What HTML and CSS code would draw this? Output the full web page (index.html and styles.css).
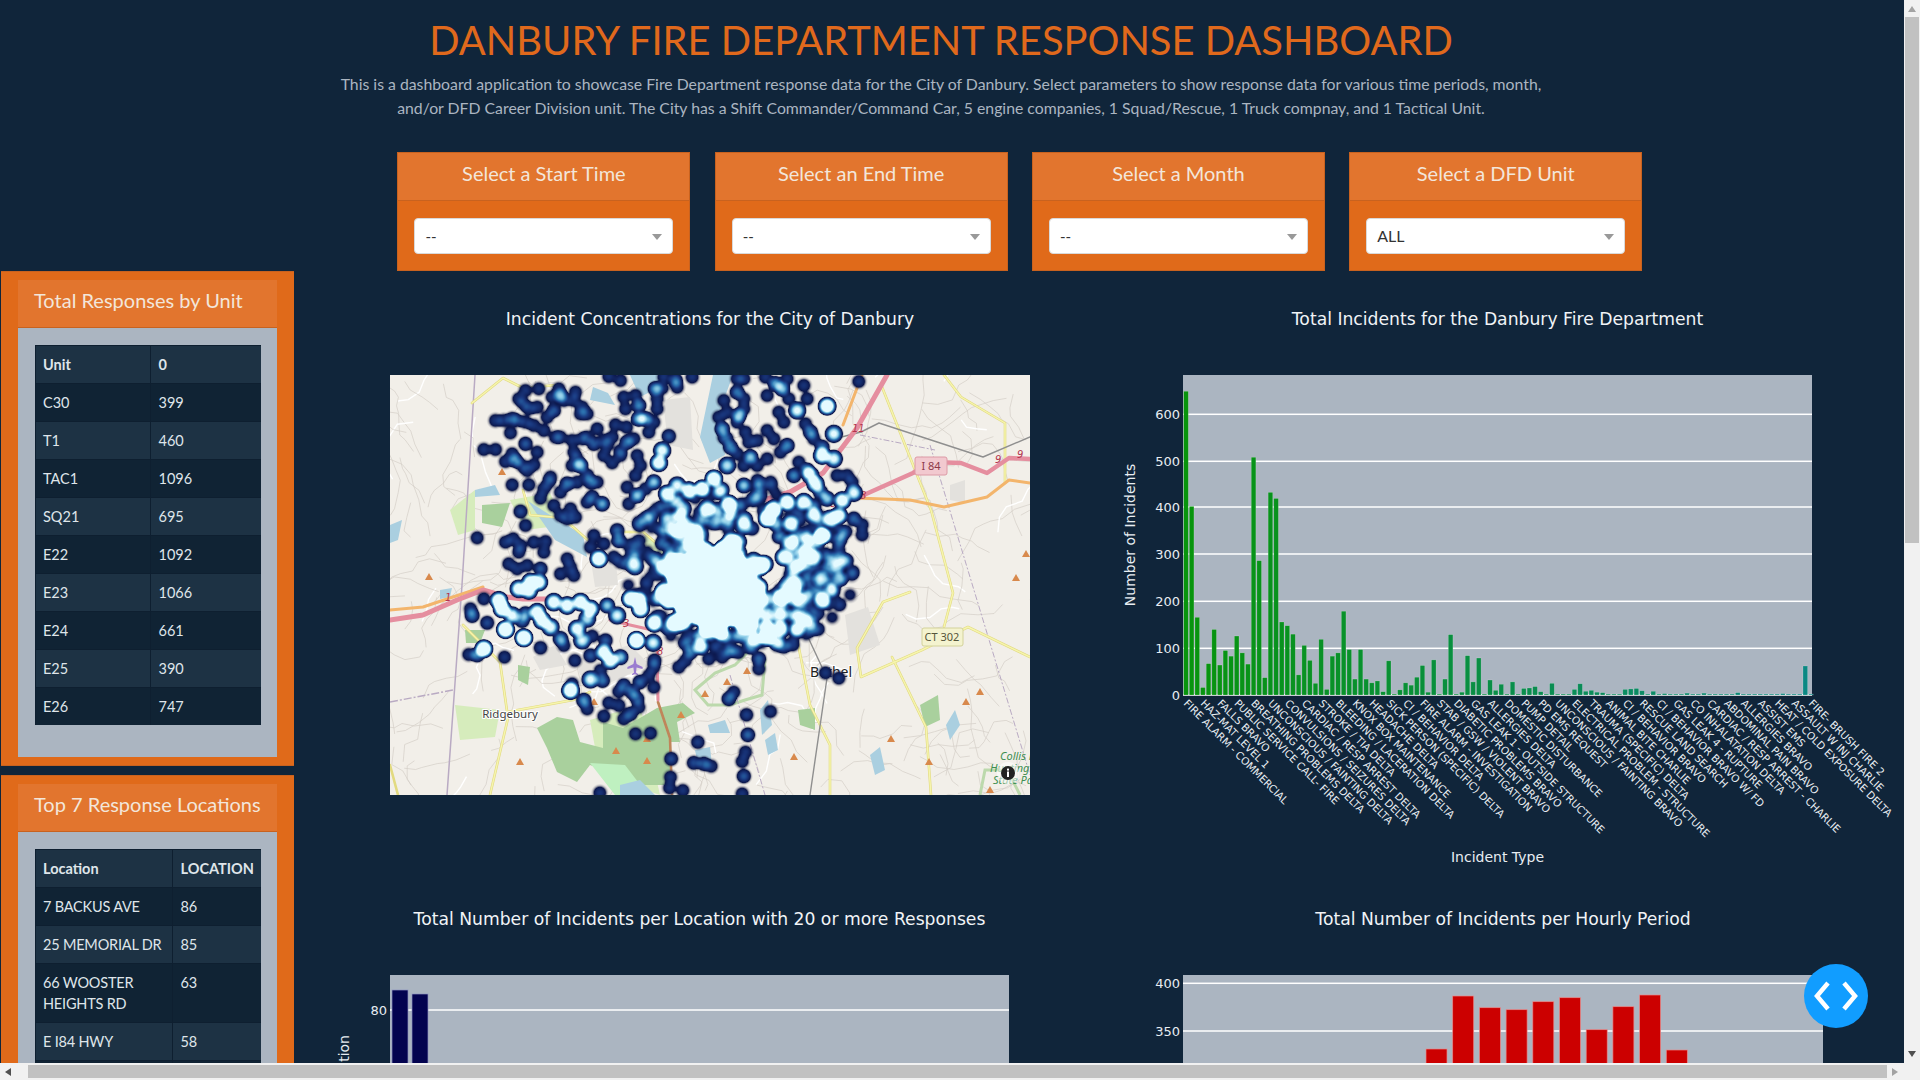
FILE: index.html
```html
<!DOCTYPE html>
<html lang="en">
  <head>
    <meta charset="UTF-8" />
    <meta name="viewport" content="width=device-width, initial-scale=1.0" />
    <title>Danbury Fire Department Response Dashboard</title>
    <link rel="stylesheet" href="styles.css">
  </head>
  <body>
    <div class="viewport">
      <header class="page-head">
        <h1>DANBURY FIRE DEPARTMENT RESPONSE DASHBOARD</h1>
        <p>
          This is a dashboard application to showcase Fire Department response data for the City of Danbury. Select parameters to show response data for various time periods, month,<br>
          and/or DFD Career Division unit. The City has a Shift Commander/Command Car, 5 engine companies, 1 Squad/Rescue, 1 Truck compnay, and 1 Tactical Unit.
        </p>
      </header>

      <section class="filters">
        <div class="card">
          <div class="card-head">Select a Start Time</div>
          <div class="card-body"><div class="select">--<span class="caret"></span></div></div>
        </div>
        <div class="card">
          <div class="card-head">Select an End Time</div>
          <div class="card-body"><div class="select">--<span class="caret"></span></div></div>
        </div>
        <div class="card">
          <div class="card-head">Select a Month</div>
          <div class="card-body"><div class="select">--<span class="caret"></span></div></div>
        </div>
        <div class="card">
          <div class="card-head">Select a DFD Unit</div>
          <div class="card-body"><div class="select select-big">ALL<span class="caret"></span></div></div>
        </div>
      </section>

      <div class="content">
        <aside class="sidebar">
          <div class="panel">
            <div class="panel-head">Total Responses by Unit</div>
            <div class="panel-body">
              <table class="units">
                <tr><th>Unit</th><th>0</th></tr>
                <tr><td>C30</td><td>399</td></tr>
                <tr><td>T1</td><td>460</td></tr>
                <tr><td>TAC1</td><td>1096</td></tr>
                <tr><td>SQ21</td><td>695</td></tr>
                <tr><td>E22</td><td>1092</td></tr>
                <tr><td>E23</td><td>1066</td></tr>
                <tr><td>E24</td><td>661</td></tr>
                <tr><td>E25</td><td>390</td></tr>
                <tr><td>E26</td><td>747</td></tr>
              </table>
            </div>
          </div>
          <div class="panel">
            <div class="panel-head">Top 7 Response Locations</div>
            <div class="panel-body">
              <table class="locations">
                <tr><th>Location</th><th>LOCATION</th></tr>
                <tr><td>7 BACKUS AVE</td><td>86</td></tr>
                <tr><td>25 MEMORIAL DR</td><td>85</td></tr>
                <tr><td>66 WOOSTER HEIGHTS RD</td><td>63</td></tr>
                <tr><td>E I84 HWY</td><td>58</td></tr>
                <tr><td>&nbsp;</td><td>&nbsp;</td></tr>
              </table>
            </div>
          </div>
        </aside>

        <main class="charts">
          <figure class="chart chart-map">
            <figcaption>Incident Concentrations for the City of Danbury</figcaption>
            <div class="map">
              <svg class="map-base" viewBox="0 0 640 420" width="640" height="420">
                <rect width="640" height="420" fill="#f2efe9" />
                <g id="map-roads"></g>

                <!-- parks -->
                <g fill="#d6ecbc">
                  <path d="M60 135 L85 115 L85 155 L68 160Z" />
                  <path d="M120 125 L160 118 L175 150 L135 155Z" />
                  <path d="M65 330 L110 335 L105 362 L70 365Z" />
                  <path d="M200 345 L250 330 L270 420 L210 400Z" />
                  <path d="M255 160 L275 175 L270 190 L250 180Z" />
                </g>
                <g fill="#a9d09d">
                  <path d="M147 353 L167 342 L183 345 L190 367 L213 373 L213 347 L233 353 L267 333 L293 328 L305 338 L287 347 L290 367 L280 367 L280 410 L253 410 L233 403 L200 390 L187 407 L167 397 L157 373Z" />
                  <path d="M92 130 L120 128 L112 152 L92 148Z" />
                  <path d="M75 255 L95 255 L90 268 L76 268Z" />
                  <path d="M128 290 L140 292 L138 310 L128 305Z" />
                  <path d="M408 335 L425 333 L425 355 L410 350Z" />
                  <path d="M530 330 L548 320 L550 345 L535 352Z" />
                </g>
                <path d="M200 388 L235 390 L258 420 L225 420Z" fill="#bff0c0" />
                <g fill="none" stroke="#bcd9ac" stroke-width="3">
                  <path d="M305 315 L325 298 L345 290 L360 275 L375 285 L372 320 L355 325 L340 330 L318 330Z" />
                  <path d="M590 420 L595 395 L610 395 L620 400 L630 420" />
                </g>

                <!-- water -->
                <g fill="#aacfe0">
                  <path d="M323 0 L310 62 L320 88 L335 80 L330 35 L343 0Z" />
                  <path d="M240 0 L250 22 L270 12 L275 0Z" />
                  <path d="M138 126 L165 165 L197 182 L193 160 L160 140Z" />
                  <path d="M203 12 L200 25 L225 30 L218 18Z" />
                  <path d="M85 115 L105 110 L110 120 L85 122Z" />
                  <path d="M0 150 L12 145 L8 165 L0 168Z" />
                  <path d="M50 215 L62 213 L60 222 L50 224Z" />
                  <path d="M318 350 L335 345 L340 358 L320 358Z" />
                  <path d="M370 335 L378 325 L382 350 L372 360Z" />
                  <path d="M375 365 L385 358 L388 375 L378 380Z" />
                  <path d="M305 375 L320 372 L322 390 L308 390Z" />
                  <path d="M230 410 L250 405 L265 420 L230 420Z" />
                  <path d="M480 380 L490 372 L495 395 L485 400Z" />
                  <path d="M565 335 L570 350 L560 365 L556 350Z" />
                </g>

                <!-- built up areas -->
                <g fill="#e3e1dd">
                  <path d="M143 282 L165 270 L177 290 L150 295Z" />
                  <path d="M185 285 L240 270 L260 290 L215 310 L190 300Z" />
                  <path d="M273 25 L300 22 L303 75 L278 70Z" />
                  <path d="M200 180 L225 175 L228 210 L205 212Z" />
                  <path d="M455 240 L478 232 L490 270 L460 280Z" />
                  <path d="M560 110 L575 105 L575 128 L560 125Z" />
                </g>

                <!-- boundary lines -->
                <g fill="none" stroke="#b9aac3" stroke-width="1.5">
                  <path d="M85 0 L72 210 L57 420" />
                  <path d="M0 327 L63 315" stroke-dasharray="8 2 2 2" />
                  <path d="M340 300 L375 420" stroke-dasharray="6 2 2 2" stroke-width="1" />
                  <path d="M540 70 L640 400" stroke-dasharray="6 2 2 2" stroke-width="1" />
                  <path d="M470 60 L545 75" stroke-dasharray="6 2 2 2" stroke-width="1" />
                </g>

                <!-- yellow roads -->
                <g fill="none" stroke-linecap="round" stroke-linejoin="round">
                  <g stroke="#e2da80" stroke-width="2.6">
                    <path d="M554 0 L571 22 L615 48 L615 108" />
                    <path d="M640 282 L578 252 L532 275 L471 302 L467 273 L493 227 L520 217" />
                    <path d="M73 250 L110 287 L118 343 L100 420" />
                    <path d="M117 337 L183 325 L200 317" />
                    <path d="M82 28 L113 3 L133 13 L167 10" />
                    <path d="M133 115 L140 140 L173 143 L200 167" />
                    <path d="M227 157 L253 157 L277 177" />
                    <path d="M492 12 L541 135 L563 218 L554 252" />
                    <path d="M407 263 L420 330 L440 370 L440 420" />
                    <path d="M502 282 L536 352 L541 420" />
                    <path d="M0 390 L8 420" />
                  </g>
                  <g stroke="#f6f5ae" stroke-width="1.4">
                    <path d="M554 0 L571 22 L615 48 L615 108" />
                    <path d="M640 282 L578 252 L532 275 L471 302 L467 273 L493 227 L520 217" />
                    <path d="M73 250 L110 287 L118 343 L100 420" />
                    <path d="M117 337 L183 325 L200 317" />
                    <path d="M82 28 L113 3 L133 13 L167 10" />
                    <path d="M133 115 L140 140 L173 143 L200 167" />
                    <path d="M227 157 L253 157 L277 177" />
                    <path d="M492 12 L541 135 L563 218 L554 252" />
                    <path d="M407 263 L420 330 L440 370 L440 420" />
                    <path d="M502 282 L536 352 L541 420" />
                  </g>

                  <!-- rail -->
                  <path d="M417 260 L437 303 L420 420" stroke="#8f8f8f" stroke-width="1.4" />
                  <path d="M471 57 L489 48 L593 82 L640 62" stroke="#8f8f8f" stroke-width="1.4" />
                  <path d="M440 65 L471 57" stroke="#8f8f8f" stroke-width="1.4" />

                  <!-- orange roads -->
                  <path d="M0 235 L33 232 L93 212" stroke="#f3b56c" stroke-width="3" />
                  <path d="M467 123 L520 125 L554 132 L597 122 L619 105 L640 108" stroke="#f3b56c" stroke-width="3" />
                  <path d="M472 0 L453 50" stroke="#f3b56c" stroke-width="3" />
                  <path d="M268 327 L280 363 L282 420" stroke="#c0855a" stroke-width="2.6" />

                  <!-- highways -->
                  <g stroke="#e58e9f">
                    <path d="M0 245 L33 240 L67 225 L93 215 L117 222 L133 224 L157 224" stroke-width="5" />
                    <path d="M220 245 L240 250 L262 255" stroke-width="3" />
                    <path d="M350 132 L400 117 L433 98 L467 53 L497 0" stroke-width="5" />
                    <path d="M467 123 L523 98 L541 87 L571 88 L597 98 L619 83 L640 84" stroke-width="4.5" />
                    <path d="M267 277 L268 325" stroke-width="3" />
                  </g>
                </g>

                <!-- peaks -->
                <g fill="#d8894c">
                  <path d="M108 100 l4 -7 l4 7Z" />
                  <path d="M35 205 l4 -7 l4 7Z" />
                  <path d="M126 390 l4 -7 l4 7Z" />
                  <path d="M222 379 l4 -7 l4 7Z" />
                  <path d="M253 367 l4 -7 l4 7Z" />
                  <path d="M287 343 l4 -7 l4 7Z" />
                  <path d="M311 322 l4 -7 l4 7Z" />
                  <path d="M333 310 l4 -7 l4 7Z" />
                  <path d="M353 299 l4 -7 l4 7Z" />
                  <path d="M253 389 l4 -7 l4 7Z" />
                  <path d="M200 330 l4 -7 l4 7Z" />
                  <path d="M400 385 l4 -7 l4 7Z" />
                  <path d="M586 320 l4 -7 l4 7Z" />
                  <path d="M632 182 l4 -7 l4 7Z" />
                  <path d="M622 206 l4 -7 l4 7Z" />
                  <path d="M572 330 l4 -7 l4 7Z" />
                  <path d="M497 367 l4 -7 l4 7Z" />
                  <path d="M535 390 l4 -7 l4 7Z" />
                  <path d="M596 418 l4 -7 l4 7Z" />
                </g>

                <!-- plane -->
                <path d="M245 282 l1.6 7 l6 3 v2 l-6 -1.5 l-0.6 5 l2 1.6 v1 l-3 -0.8 l-3 0.8 v-1 l2 -1.6 l-0.6 -5 l-6 1.5 v-2 l6 -3Z" fill="#9a7cd0" />

                <!-- labels -->
                <g class="map-num">
                  <text x="462" y="57">11</text>
                  <text x="470" y="124">8</text>
                  <text x="605" y="88">9</text>
                  <text x="627" y="83">9</text>
                  <text x="55" y="226">1</text>
                  <text x="440" y="132">8</text>
                  <text x="233" y="252">3</text>
                  <text x="267" y="280">8</text>
                </g>
                <text class="map-place" x="120" y="343">Ridgebury</text>
                <text class="map-town" x="441" y="302">Bethel</text>
                <g>
                  <rect x="525" y="82" width="32" height="18" rx="2" fill="#f2c9cf" stroke="#dc9aa6" />
                  <text class="map-shield" x="541" y="95">I 84</text>
                  <rect x="532" y="253" width="41" height="18" rx="2" fill="#f4f3cf" stroke="#d3d29a" />
                  <text class="map-shield map-shield-ct" x="552" y="266">CT 302</text>
                </g>
                <g class="map-park">
                  <text x="610" y="385">Collis P</text>
                  <text x="600" y="397">Huntingt</text>
                  <text x="603" y="409">State Par</text>
                </g>
              </svg>
              <canvas id="heat" class="map-heat" width="640" height="420"></canvas>
              <svg class="map-info" viewBox="0 0 24 24" width="24" height="24">
                <circle cx="12" cy="12" r="11" fill="#fff" fill-opacity="0.55" />
                <circle cx="12" cy="12" r="7" fill="#222" />
                <rect x="11" y="10.5" width="2" height="5.5" fill="#fff" />
                <rect x="11" y="7.6" width="2" height="2" fill="#fff" />
              </svg>
            </div>
          </figure>

          <figure class="chart chart-types">
            <figcaption>Total Incidents for the Danbury Fire Department</figcaption>
            <svg id="types-plot" class="plot" width="629" height="320"></svg>
          </figure>

          <figure class="chart chart-locations">
            <figcaption>Total Number of Incidents per Location with 20 or more Responses</figcaption>
            <svg id="locations-plot" class="plot" width="619" height="320"></svg>
          </figure>

          <figure class="chart chart-hours">
            <figcaption>Total Number of Incidents per Hourly Period</figcaption>
            <svg id="hours-plot" class="plot" width="640" height="320"></svg>
          </figure>
        </main>
      </div>
    </div>

    <div class="scroll-y">
      <span class="arrow arrow-up"></span>
      <div class="thumb-y"></div>
      <span class="arrow arrow-down"></span>
    </div>
    <div class="scroll-x">
      <span class="arrow arrow-left"></span>
      <div class="thumb-x"></div>
      <span class="arrow arrow-right"></span>
    </div>
    <div class="scroll-corner"></div>

    <button class="debug-toggle" type="button" aria-label="Toggle">
      <svg viewBox="0 0 64 64" width="64" height="64">
        <path d="M24 19 L13 32 L24 45 M40 19 L51 32 L40 45" fill="none" stroke="#fff" stroke-width="4.5" />
      </svg>
    </button>

    <script src="charts.js"></script>
  </body>
</html>
```

FILE: styles.css
```css
html,
body {
  height: 100%;
}

body {
  margin: 0;
  overflow: hidden;
  display: grid;
  grid-template-columns: 1904px 16px;
  grid-template-rows: 1063px 17px;
  background-color: #10253a;
  font-family: "Lato", sans-serif;
  color: #dfe5ea;
}

.viewport {
  overflow: hidden;
  background-color: #10253a;
}

.page-head {
  width: 1882px;
  height: 152px;
  text-align: center;
}

.page-head h1 {
  margin: 0;
  padding-top: 17px;
  font-size: 39.9px;
  line-height: 45px;
  font-weight: 400;
  color: #e0691c;
}

.page-head p {
  margin: 10px 0 0;
  font-size: 15.8px;
  line-height: 24px;
  color: #abb5c1;
}

.filters {
  display: grid;
  grid-template-columns: repeat(4, 293px);
  gap: 24.3px;
  margin-left: 397.4px;
  height: 119px;
}

.card {
  background-color: #e06a1a;
  border: 1px solid #c8621f;
  box-sizing: border-box;
}

.card-head {
  height: 48px;
  box-sizing: border-box;
  padding-top: 8px;
  font-size: 20px;
  line-height: 24px;
  text-align: center;
  color: #f3e6da;
  background-color: #e2752e;
  border-bottom: 1px solid #c8621f;
}

.card-body {
  padding: 17px 16px 16px;
}

.select {
  position: relative;
  height: 36px;
  box-sizing: border-box;
  padding: 0 10px;
  font-size: 15px;
  line-height: 34px;
  color: #333;
  background-color: #fff;
  border: 1px solid #d9d9d9;
  border-radius: 4px;
}

.select-big {
  font-size: 16px;
}

.caret {
  position: absolute;
  top: 15px;
  right: 10px;
  border-top: 6px solid #999;
  border-left: 5px solid transparent;
  border-right: 5px solid transparent;
}

.content {
  display: flex;
}

.sidebar {
  flex: none;
  width: 293px;
  margin-left: 1px;
  display: flex;
  flex-direction: column;
  gap: 9px;
}

.panel {
  box-sizing: border-box;
  padding: 8px 17px;
  background-color: #e06a1a;
  border: 1px solid #c8621f;
  border-width: 1px 0 1px 0;
}

.panel-head {
  height: 48px;
  box-sizing: border-box;
  padding: 8px 16px 0;
  font-size: 20px;
  line-height: 24px;
  color: #f3e6da;
  background-color: #e2752e;
  border-bottom: 1px solid #c8621f;
}

.panel-body {
  padding: 17px 17px 32px;
  background-color: #abb5c1;
}

table {
  width: 226px;
  table-layout: fixed;
  border-collapse: collapse;
  font-size: 14.5px;
  line-height: 21px;
}

th,
td {
  padding: 8px 8px 8px 7.5px;
  text-align: left;
  vertical-align: top;
  border-top: 1px solid #0e1f30;
  border-left: 1px solid #0e1f30;
}

th:first-child,
td:first-child {
  padding-left: 7px;
}

th {
  font-weight: 700;
  font-size: 14.5px;
}

tr:nth-child(odd) {
  background-color: #1d3244;
}

tr:nth-child(even) {
  background-color: #102334;
}

.units th:first-child {
  width: 99px;
}

.locations th:first-child {
  width: 121px;
}

.locations td {
  letter-spacing: -0.2px;
}

.charts {
  flex: none;
  display: grid;
  grid-template-columns: 793px 700px;
  grid-auto-rows: 600px;
  margin-left: 96px;
}

.chart {
  margin: 0;
  padding-top: 37px;
}

.chart figcaption {
  height: 22px;
  margin-bottom: 45px;
  font-family: "DejaVu Sans", Verdana, sans-serif;
  font-size: 17.2px;
  line-height: 22px;
  text-align: center;
  white-space: nowrap;
  color: #f1f4f7;
}

.chart-map {
  width: 640px;
}

.chart-types {
  width: 629px;
}

.chart-locations {
  width: 619px;
}

.chart-hours {
  width: 640px;
}

.map {
  position: relative;
  width: 640px;
  height: 420px;
}

.map-base {
  display: block;
}

.map-heat {
  position: absolute;
  top: 0;
  left: 0;
}

.map-info {
  position: absolute;
  top: 386px;
  left: 606px;
}

.map-num text {
  font-family: "DejaVu Sans", sans-serif;
  font-size: 10px;
  font-style: italic;
  fill: #b5354d;
}

.map-place {
  font-family: "Noto Sans", sans-serif;
  font-size: 11.5px;
  text-anchor: middle;
  fill: #444;
  paint-order: stroke;
  stroke: #fff;
  stroke-width: 2px;
}

.map-town {
  font-family: "Noto Sans", sans-serif;
  font-size: 14px;
  text-anchor: middle;
  fill: #222;
  paint-order: stroke;
  stroke: #fff;
  stroke-width: 2px;
}

.map-shield {
  font-family: "Noto Sans", sans-serif;
  font-size: 11px;
  text-anchor: middle;
  fill: #8c3a4a;
}

.map-shield-ct {
  fill: #55553a;
}

.map-park text {
  font-family: "Noto Sans", sans-serif;
  font-size: 11px;
  font-style: italic;
  fill: #3f8f52;
}

.plot {
  display: block;
  overflow: visible;
}

.plot text {
  font-family: "DejaVu Sans", Verdana, sans-serif;
  fill: #e8edf2;
}

.tick-y {
  font-size: 13px;
  text-anchor: end;
}

.tick-x {
  font-size: 10.4px;
}

.axis-title {
  font-size: 14px;
  text-anchor: middle;
}

.axis-title-end {
  text-anchor: end;
}

.scroll-y {
  grid-column: 2;
  grid-row: 1;
  display: flex;
  flex-direction: column;
  align-items: center;
  background-color: #f1f1f1;
}

.thumb-y {
  width: 14px;
  height: 526px;
  margin-bottom: auto;
  background-color: #c1c1c1;
}

.scroll-x {
  grid-column: 1;
  grid-row: 2;
  display: flex;
  align-items: center;
  background-color: #f1f1f1;
}

.thumb-x {
  width: 1859px;
  height: 13px;
  margin-left: 11px;
  background-color: #c1c1c1;
}

.scroll-corner {
  grid-column: 2;
  grid-row: 2;
  background-color: #f1f1f1;
}

.arrow {
  flex: none;
  display: block;
  width: 0;
  height: 0;
  border-style: solid;
  border-color: transparent;
}

.arrow-up {
  margin: 6px 0 5px;
  border-width: 0 4px 6px;
  border-bottom-color: #a3a3a3;
}

.arrow-down {
  margin: 5px 0 6px;
  border-width: 6px 4px 0;
  border-top-color: #505050;
}

.arrow-left {
  margin: 0 6px 0 5px;
  border-width: 4px 6px 4px 0;
  border-right-color: #505050;
}

.arrow-right {
  margin-left: 5px;
  border-width: 4px 0 4px 6px;
  border-left-color: #a3a3a3;
}

.debug-toggle {
  position: fixed;
  top: 964px;
  left: 1804px;
  width: 64px;
  height: 64px;
  padding: 0;
  border: none;
  border-radius: 50%;
  background-color: #119dff;
  cursor: pointer;
}

.debug-toggle svg {
  display: block;
}
```

FILE: charts.js
```js
const SVG_NS = "http://www.w3.org/2000/svg";

function el(parent, name, attrs, text) {
  const node = document.createElementNS(SVG_NS, name);
  for (const key in attrs) node.setAttribute(key, attrs[key]);
  if (text !== undefined) node.textContent = text;
  parent.appendChild(node);
  return node;
}

// small fixed-seed generator, so the picture is the same on every load
function seeded(seed) {
  return () => {
    seed = (seed + 0x6d2b79f5) | 0;
    let t = Math.imul(seed ^ (seed >>> 15), 1 | seed);
    t = (t + Math.imul(t ^ (t >>> 7), 61 | t)) ^ t;
    return ((t ^ (t >>> 14)) >>> 0) / 4294967296;
  };
}

function gridY(svg, width, ticks) {
  ticks.forEach(([label, y]) => {
    el(svg, "rect", { x: 0, y: y - 0.75, width: width, height: 1.5, fill: "#fff" });
    el(svg, "text", { class: "tick-y", x: -3, y: y + 5 }, label);
  });
}

// ---- incident types ----
const typeCounts = [
  649, 403, 166, 16, 67, 140, 64, 95, 83, 126, 90, 66, 508, 287, 37, 433, 420, 156, 148, 130,
  43, 106, 74, 25, 119, 12, 83, 90, 179, 97, 34, 97, 34, 26, 30, 7, 73, 2, 11, 26,
  21, 38, 63, 6, 75, 2, 34, 129, 2, 6, 84, 28, 79, 2, 32, 10, 23, 2, 28, 2,
  14, 15, 18, 7, 2, 25, 2, 2, 2, 12, 24, 8, 10, 6, 5, 2, 2, 2, 12, 13,
  14, 9, 2, 8, 2, 3, 2, 2, 2, 4, 2, 2, 4, 2, 2, 2, 2, 2, 5, 2,
  2, 2, 2, 2, 2, 2, 3, 2, 2, 2, 62, 2,
];

const typeLabels = [
  "FIRE ALARM - COMMERCIAL", "HAZ-MAT LEVEL 1", "FALLS BRAVO", "PUBLIC SERVICE CALL- FIRE",
  "BREATHING PROBLEMS DELTA", "UNCONSCIOUS / FAINTING DELTA", "CONVULSIONS / SEIZURES DELTA",
  "CARDIAC / RESP ARREST DELTA", "STROKE / TIA DELTA", "BLEEDING / LACERATION DELTA",
  "KNOX BOX MAINTENANCE", "HEADACHE DELTA", "SICK PERSON (SPECIFIC) DELTA", "CI / BEHAVIOR DELTA",
  "FIRE ALARM - INVESTIGATION", "STAB / GSW / VIOLENT BRAVO", "DIABETIC PROBLEMS BRAVO",
  "GAS LEAK 1 - OUTSIDE STRUCTURE", "ALLERGIES DELTA", "DOMESTIC DISTURBANCE", "PUMP DETAIL",
  "PD EMS REQUEST", "UNCONSCIOUS / FAINTING BRAVO", "ELECTRICAL PROBLEM - STRUCTURE",
  "TRAUMA (SPECIFIC) DELTA", "ANIMAL BITE CHARLIE", "CI / BEHAVIOR BRAVO", "RESCUE LAND SEARCH",
  "CI / BEHAVIOR BRAVO W/ FD", "GAS LEAK 4 - RUPTURE", "CO INHALATATION DELTA",
  "CARDIAC / RESP ARREST - CHARLIE", "ABDOMINAL PAIN BRAVO", "ALLERGIES BRAVO", "ASSIST EMS",
  "HEAT / COLD EXPOSURE DELTA", "ASSAULT W INJ CHARLIE", "FIRE- BRUSH FIRE 2",
];

function drawTypes() {
  const svg = document.getElementById("types-plot");
  el(svg, "rect", { width: 629, height: 320, fill: "#abb5c1" });
  gridY(svg, 629, [["600", 39.3], ["500", 86.3], ["400", 132], ["300", 179], ["200", 226.3], ["100", 273.3], ["0", 320]]);

  const step = 5.63;
  typeCounts.forEach((count, i) => {
    const t = i / (typeCounts.length - 1);
    const h = count * 0.468;
    // colour runs from green to teal along the axis
    const fill = "rgb(" + Math.round(8 + 3 * t) + "," + Math.round(148 - 12 * t) + "," + Math.round(12 + 120 * t) + ")";
    el(svg, "rect", {
      x: 0.7 + step * i, y: 320 - h, width: 4.6, height: h,
      fill: fill, stroke: "rgba(255,255,255,0.28)", "stroke-width": 0.6,
    });
  });

  typeLabels.forEach((label, i) => {
    const x = step * 3 * i;
    el(svg, "text", { class: "tick-x", x: 0, y: 0, transform: "translate(" + x + ",329) rotate(45)" }, label);
  });

  el(svg, "text", { class: "axis-title", x: 0, y: 0, transform: "translate(-48,160) rotate(-90)" }, "Number of Incidents");
  el(svg, "text", { class: "axis-title", x: 314.5, y: 487 }, "Incident Type");
}

// ---- locations ----
function drawLocations() {
  const svg = document.getElementById("locations-plot");
  el(svg, "rect", { width: 619, height: 320, fill: "#abb5c1" });
  gridY(svg, 619, [["80", 35]]);
  [[2, 15], [22, 19]].forEach(([x, y]) => {
    el(svg, "rect", { x: x, y: y, width: 16, height: 320 - y, fill: "#03034f", stroke: "#8f93c0", "stroke-width": 0.7 });
  });
  el(svg, "text", { class: "axis-title axis-title-end", x: 0, y: 0, transform: "translate(-41,60) rotate(-90)" }, "Location");
}

// ---- hours ----
function drawHours() {
  const svg = document.getElementById("hours-plot");
  el(svg, "rect", { width: 640, height: 320, fill: "#abb5c1" });
  gridY(svg, 640, [["400", 8.3], ["350", 56]]);
  [74, 21, 32.7, 34.7, 26.7, 22.7, 54.7, 31.7, 20, 75].forEach((y, i) => {
    el(svg, "rect", { x: 243 + i * 26.7, y: y, width: 21, height: 320 - y, fill: "#cc0000", stroke: "#e88a8a", "stroke-width": 0.7 });
  });
}

// ---- map: minor roads ----
function drawMinorRoads() {
  const group = document.getElementById("map-roads");
  const rnd = seeded(7);
  for (let i = 0; i < 300; i++) {
    let x = rnd() * 640;
    let y = rnd() * 420;
    let d = "M" + x.toFixed(1) + " " + y.toFixed(1);
    let angle = rnd() * 6.28;
    const parts = 3 + Math.floor(rnd() * 6);
    for (let j = 0; j < parts; j++) {
      angle += (rnd() - 0.5) * 1.6;
      x += Math.cos(angle) * (6 + rnd() * 12);
      y += Math.sin(angle) * (6 + rnd() * 12);
      d += " L" + x.toFixed(1) + " " + y.toFixed(1);
    }
    el(group, "path", { d: d, fill: "none", stroke: i % 9 === 0 ? "#fff" : "#d4cfc7", "stroke-width": i % 9 === 0 ? 1.4 : 0.7 });
  }
}

// ---- map: density layer ----
// points are [x, y, weight] read off a 3x view of the map
const heatTop = [
  [405,45],[385,70],[400,85],[440,95],[415,100],[445,40],[505,40],[510,60,1.8],[485,65],[520,75],[555,50],[550,75],[575,95],[590,115],[570,115],[490,105,1.3],[470,125],[430,150],[460,165],[405,140],[365,130,1.2],[340,135],[315,135],[380,135],[360,172],[510,185],[495,185],[405,205,1.3],[280,222],[315,222],[440,230],[365,235],[375,255,1.6],[345,258],[395,270],[430,268],[410,285],
  [550,230],[560,250],[570,270,2],[545,270],[590,185],[575,190],[545,195],[620,160],[675,148],[708,155],[610,205,1.3],[640,195],[665,185],[650,210],[640,240],[665,262],[690,225],[710,200,1.5],[730,190],[690,240],[740,240],[750,270],[735,300],[590,300,1.2],[600,320,1.3],[560,320],[530,325,1.5],[510,350],[620,320],[605,365,1.3],[635,385,1.8],[590,380],[480,305],[475,320],[460,340],[365,328],[415,328],[450,368],[490,390],[540,400],[510,420],[530,430],[555,425],[390,408,1.2],[405,450],[260,487],
  [795,40,1.8],[815,38],[735,60],[745,90,1.6],[700,65],[705,100],[800,70],[800,100],[745,130,2],[765,130,1.8],[790,140],[775,170],[835,182,1.3],[690,15],[655,3],[855,15,1.5],[860,35],[905,5],[820,5],
  [1040,10],[1060,10],[1125,5],[1190,10],[1155,25,1.8],[1175,40,2],[1130,60],[1195,70],[1240,30],[1250,70],[1040,50,1.5],[1060,70],[1000,75],[1010,110],[985,125],[1045,120,2],[1060,100],[1040,140],[995,160,1.8],[1000,185],[1020,215,1.6],[1010,190],[1065,170],[1075,200],[1100,195],[1165,110],[1180,140],[1130,165],[1150,190],[1190,210,1.6],[1170,230],[1245,145],[1260,170,1.6],[1270,190],[1220,105,2.5],[1310,92,3.5],[1330,175,2.5],[1405,18],[1295,215,1.5],[1295,240,3],[1330,250,2.5],[1080,245,2],[1060,270],[1100,270],[1040,235],[1130,250],[1210,300,1.6],[1225,260],[1250,285,2],[1260,300,2.4],[1275,325,2.8],
  [1340,300],[1370,300],[1385,320],[1390,352,2.5],[1355,375,3],[1290,350,1.6],[1310,370,2],[1345,420,3],[1320,430,3],[1390,430,1.4],[1415,448],[1415,478],
  [815,225,2.6],[805,262,3],[790,320,2],[765,340],[740,360,2],[710,335],[715,385],[830,355,3],[860,330,2.5],[895,345,3],[935,340,3.5],[970,310,3.5],[1010,270,2.2],[1015,385,3.5],[990,400],[950,400,3],[880,400,2],[840,385],[800,400],[780,430],[745,440],[885,450,2.2],[850,460,2.5],[920,450],[1060,330,2],[1100,340],[1140,320],[1090,375],[1190,380,3.5],[1150,400,3.5],[1130,430,3.5],[1240,380,3],[1200,445,3],[1220,400],[1270,420,2.4],[1295,480,4],[1200,500,2.5],[1250,490,2],[1270,545,3],[1180,545,3],[1305,535],[1240,560,2.4],[1300,580],[1350,610,2],[1290,610,2.4],
  [368,490],[345,500],[390,510],[430,500],[465,498],[385,530],[460,530],[355,565],[380,580],[410,570],[450,580,1.3],[530,550],[540,575],[510,595],[550,600],[420,620,3.2],[445,620,3],[610,480],[640,505],[680,465,1.4],[685,495,1.6],[715,510],[600,515],[740,520],[670,545],[690,560],[735,555],[780,547],[625,550,3.6],
];

const heatBottom = [
  [385,10,3],[415,15,3],[280,40],[325,45,3.5],[335,70,3.5],[240,70],[245,90,1.5],[290,112,1.2],[345,132,4],[400,157,4],[365,90,2.6],[405,85,1.6],[395,105,1.5],[440,80,3],[455,105,3],[480,125,2.6],[450,187,1.1],[235,207],[280,190,3.8],[260,208,1.6],[342,215],[490,50,3],[530,60,3],[570,50,3.2],[600,70,3],[590,100,2.2],[650,60,2],[680,90,2.4],[720,40,3.5],[750,70,3.5],[745,45,3.5],[790,112,3],[560,130,2.8],[575,165,2.4],[510,160,1.8],[520,180],[605,152],[645,165,1.3],[640,200,3],[660,225,3],[690,215,2],[600,210,1.3],[553,225],[738,165,4.2],[788,172,2.4],[792,225,1.2],[790,245],[775,270],[865,245],[885,225],[900,200,1.6],[930,182,3],[955,220],[995,215],[1080,185,1.5],[1105,220,1.4],[1105,250],[1160,180],[1180,185],[600,282,2.5],[636,285,1.5],[630,255],[748,290,1.4],[700,300,1.3],[685,318],[725,320,1.5],[740,340,1.3],[745,365],[655,352],[685,360],[720,385,1.3],[700,400],[640,392],[735,445],[780,443],[790,305],[540,315,3.5],[545,295],[580,345,1.7],[590,370],[1030,320],[1015,340,1.4],[1068,388,1.1],[1140,378],[1072,448,1.4],[922,470,1.1],[1065,500],[1055,528],[842,520,1.2],[910,532,1.2],[940,535,1.3],[962,542],[840,575],[1060,572,1.3],[837,607],[877,615],[628,622],[1055,625],[1305,262],[1345,278],
  [1000,150,1.8],[1050,150,1.6],[1130,130,3.5],[1130,155,3.5],[1170,130,3],[1220,130,3],[1240,100,2.4],[1210,90,2],[1260,110,1.6],[1295,45,3.2],[1320,15,2],[1230,45,1.5],[1175,35,3],[1210,5,2],[1060,125,3],[930,150,1.6],[850,110,3],[830,125,1.6],[1090,120,2.5],[1180,80,1.8],[960,130,1.6],
];

const ramp = [
  [0.0, 11, 22, 60, 0],
  [0.1, 30, 36, 70, 0.28],
  [0.26, 12, 24, 78, 1],
  [0.7, 26, 58, 130, 1],
  [1.2, 46, 120, 180, 1],
  [1.8, 140, 205, 232, 1],
  [2.4, 228, 250, 255, 1],
];

function rampColour(d) {
  if (d >= 2.4) return ramp[ramp.length - 1];
  for (let i = 1; i < ramp.length; i++) {
    if (d < ramp[i][0]) {
      const a = ramp[i - 1];
      const b = ramp[i];
      const t = (d - a[0]) / (b[0] - a[0]);
      return [d, a[1] + (b[1] - a[1]) * t, a[2] + (b[2] - a[2]) * t, a[3] + (b[3] - a[3]) * t, a[4] + (b[4] - a[4]) * t];
    }
  }
  return ramp[ramp.length - 1];
}

function drawHeat() {
  const canvas = document.getElementById("heat");
  const w = canvas.width;
  const h = canvas.height;
  const density = new Float32Array(w * h);

  function add(px, py, weight) {
    const R = weight > 2 ? 10.5 : 9.5;
    for (let y = Math.max(0, Math.floor(py - R)); y < Math.min(h, py + R); y++) {
      for (let x = Math.max(0, Math.floor(px - R)); x < Math.min(w, px + R); x++) {
        const q = ((x - px) * (x - px) + (y - py) * (y - py)) / (R * R);
        if (q < 1) density[y * w + x] += weight * (1 - q) * (1 - q);
      }
    }
  }

  const strength = (p) => Math.pow(p[2] || 1, 1.6) * 0.6;
  heatTop.forEach((p) => add(p[0] / 3, p[1] / 3, strength(p)));
  heatBottom.forEach((p) => add(p[0] / 3, p[1] / 3 + 210, strength(p)));

  const rnd = seeded(91);

  // solid core of the city
  for (let i = 0; i < 340; i++) {
    const a = rnd() * 6.283;
    const r = Math.sqrt(rnd());
    const spike = 0.88 + 0.2 * Math.sin(a * 9);
    add(324 + Math.cos(a) * r * 56 * spike, 212 + Math.sin(a) * r * 48 * spike, 2.6);
  }

  // busy ring of the town around the core, cooling towards its rim
  for (let i = 0; i < 320; i++) {
    const a = rnd() * 6.283;
    const r = 0.45 + rnd() * 0.6;
    const x = 350 + Math.cos(a) * r * 110;
    const y = 192 + Math.sin(a) * r * 84;
    if (y < 95) continue;
    const hot = rnd();
    if (r < 0.72) add(x, y, hot < 0.15 ? 2.2 : hot < 0.6 ? 0.9 : 0.5);
    else add(x, y, hot < 0.05 ? 2.2 : hot < 0.4 ? 0.7 : 0.4);
  }

  const ctx = canvas.getContext("2d");
  const image = ctx.createImageData(w, h);
  for (let i = 0; i < density.length; i++) {
    const c = rampColour(density[i]);
    image.data[i * 4] = c[1];
    image.data[i * 4 + 1] = c[2];
    image.data[i * 4 + 2] = c[3];
    image.data[i * 4 + 3] = c[4] * 255;
  }
  ctx.putImageData(image, 0, 0);
}

drawTypes();
drawLocations();
drawHours();
drawMinorRoads();
drawHeat();
```
